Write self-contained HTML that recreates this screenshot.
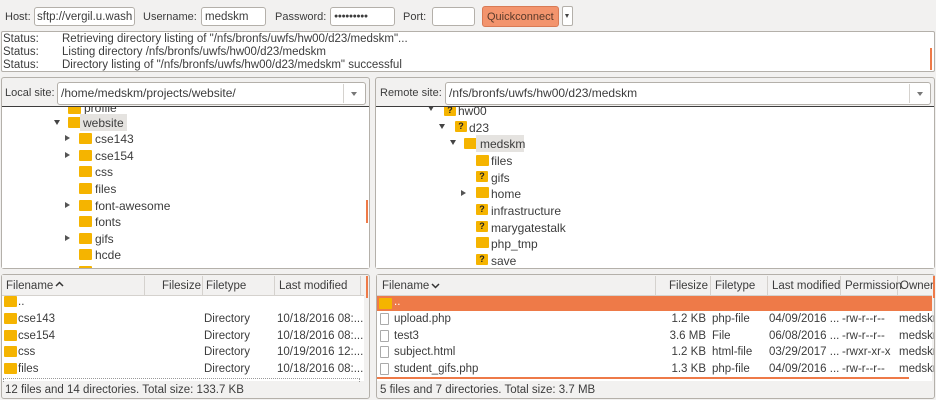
<!DOCTYPE html>
<html><head><meta charset="utf-8"><style>
*{margin:0;padding:0;box-sizing:border-box}
body{width:936px;height:400px;background:#f2f1f0;position:relative;overflow:hidden;font-family:"Liberation Sans",sans-serif;font-size:11.5px;color:#3c3c3c}
.a{position:absolute}
.t{position:absolute;white-space:nowrap;line-height:14px}
.s{font-size:11px}
.in{position:absolute;background:#fff;border:1px solid #b4b0aa;border-radius:3px}
.box{position:absolute;background:#fff;border:1px solid #b4b0aa;border-radius:3px}
.f{position:absolute;width:13px;height:11px;background:#f5b400;border-radius:1px}
.q{position:absolute;width:12px;height:11px;background:#f5b400;border-radius:1px;font-size:9px;font-weight:bold;line-height:11px;text-align:center;color:#222}
.ar{position:absolute;width:0;height:0}
.dn{border-left:3px solid transparent;border-right:3px solid transparent;border-top:5px solid #444}
.rt{border-top:3px solid transparent;border-bottom:3px solid transparent;border-left:5px solid #555}
.doc{position:absolute;width:9px;height:12px;border:1px solid #aaa;background:#fff;border-radius:1px}
.sep{position:absolute;width:1px;background:#d5d2ce}
.or{position:absolute;background:#ee7a48}
</style></head><body>
<!-- toolbar -->
<div class="t s" style="left:5px;top:10px">Host:</div>
<div class="in" style="left:34px;top:7px;width:101px;height:19px"></div>
<div class="t" style="left:37px;top:10px">sftp://vergil.u.wash</div>
<div class="t s" style="left:143px;top:10px">Username:</div>
<div class="in" style="left:201px;top:7px;width:65px;height:19px"></div>
<div class="t" style="left:205px;top:10px">medskm</div>
<div class="t s" style="left:275px;top:10px">Password:</div>
<div class="in" style="left:330px;top:7px;width:65px;height:19px"></div>
<div class="t" style="left:334px;top:10px;font-size:7px;letter-spacing:-0.5px">●●●●●●●●●</div>
<div class="t s" style="left:403px;top:10px">Port:</div>
<div class="in" style="left:432px;top:7px;width:43px;height:19px"></div>
<div class="a" style="left:482px;top:6px;width:77px;height:21px;background:#f3946d;border:1px solid #d87a55;border-radius:3px"></div>
<div class="t s" style="left:487px;top:10px;color:#5a3a2a">Quickconnect</div>
<div class="a" style="left:562px;top:6px;width:11px;height:20px;background:#fff;border:1px solid #b4b0aa;border-radius:2px"></div>
<div class="ar dn" style="left:565px;top:14px;border-width:4px 2.5px 0 2.5px"></div>
<!-- status -->
<div class="box" style="left:1px;top:31px;width:934px;height:41px;border-radius:2px"></div>
<div class="t" style="left:3px;top:32px">Status:</div><div class="t" style="left:62px;top:32px">Retrieving directory listing of "/nfs/bronfs/uwfs/hw00/d23/medskm"...</div>
<div class="t" style="left:3px;top:45px">Status:</div><div class="t" style="left:62px;top:45px">Listing directory /nfs/bronfs/uwfs/hw00/d23/medskm</div>
<div class="t" style="left:3px;top:58px">Status:</div><div class="t" style="left:62px;top:58px">Directory listing of "/nfs/bronfs/uwfs/hw00/d23/medskm" successful</div>
<div class="or" style="left:930px;top:48px;width:2px;height:22px"></div>
<!-- local site panel -->
<div class="box" style="left:1px;top:77px;width:369px;height:192px;background:#f2f1f0"></div>
<div class="t s" style="left:5px;top:86px">Local site:</div>
<div class="in" style="left:57px;top:82px;width:309px;height:23px"></div>
<div class="t" style="left:61px;top:86px;font-size:12px">/home/medskm/projects/website/</div>
<div class="sep" style="left:343px;top:84px;height:19px"></div>
<div class="ar dn" style="left:351px;top:92px;border-width:4px 3px 0 3px;border-top-color:#777"></div>
<div class="a" style="left:2px;top:106px;width:367px;height:162px;background:#fff;border-top:1px solid #3c3c3c"></div>
<div class="a" style="left:2px;top:107px;width:367px;height:161px;overflow:hidden;font-size:12px">
 <div class="f" style="left:66px;top:-4px"></div><div class="t" style="left:82px;top:-6px">profile</div>
 <div class="ar dn" style="left:52px;top:13px"></div><div class="f" style="left:66px;top:10px"></div>
 <div class="a" style="left:78px;top:7px;width:47px;height:17px;background:#e5e3e0"></div><div class="t" style="left:81px;top:9px">website</div>
 <div class="ar rt" style="left:63px;top:28px"></div><div class="f" style="left:77px;top:26px"></div><div class="t" style="left:93px;top:25px">cse143</div>
 <div class="ar rt" style="left:63px;top:45px"></div><div class="f" style="left:77px;top:43px"></div><div class="t" style="left:93px;top:42px">cse154</div>
 <div class="f" style="left:77px;top:59px"></div><div class="t" style="left:93px;top:58px">css</div>
 <div class="f" style="left:77px;top:76px"></div><div class="t" style="left:93px;top:75px">files</div>
 <div class="ar rt" style="left:63px;top:95px"></div><div class="f" style="left:77px;top:93px"></div><div class="t" style="left:93px;top:92px">font-awesome</div>
 <div class="f" style="left:77px;top:109px"></div><div class="t" style="left:93px;top:108px">fonts</div>
 <div class="ar rt" style="left:63px;top:128px"></div><div class="f" style="left:77px;top:126px"></div><div class="t" style="left:93px;top:125px">gifs</div>
 <div class="f" style="left:77px;top:142px"></div><div class="t" style="left:93px;top:141px">hcde</div>
 <div class="f" style="left:77px;top:159px"></div>
</div>
<div class="or" style="left:366px;top:200px;width:2px;height:23px"></div>
<!-- remote site panel -->
<div class="box" style="left:375px;top:77px;width:560px;height:192px;background:#f2f1f0"></div>
<div class="t s" style="left:380px;top:86px">Remote site:</div>
<div class="in" style="left:445px;top:82px;width:486px;height:23px"></div>
<div class="t" style="left:449px;top:86px;font-size:12px">/nfs/bronfs/uwfs/hw00/d23/medskm</div>
<div class="sep" style="left:909px;top:84px;height:19px"></div>
<div class="ar dn" style="left:917px;top:92px;border-width:4px 3px 0 3px;border-top-color:#777"></div>
<div class="a" style="left:376px;top:106px;width:558px;height:162px;background:#fff;border-top:1px solid #3c3c3c"></div>
<div class="a" style="left:376px;top:107px;width:558px;height:161px;overflow:hidden;font-size:12px">
 <div class="ar dn" style="left:52px;top:-1px"></div><div class="q" style="left:68px;top:-2px">?</div><div class="t" style="left:82px;top:-3px">hw00</div>
 <div class="ar dn" style="left:63px;top:17px"></div><div class="q" style="left:79px;top:14px">?</div><div class="t" style="left:93px;top:14px">d23</div>
 <div class="ar dn" style="left:74px;top:33px"></div><div class="f" style="left:88px;top:31px"></div>
 <div class="a" style="left:100px;top:28px;width:48px;height:17px;background:#e5e3e0"></div><div class="t" style="left:104px;top:30px">medskm</div>
 <div class="f" style="left:100px;top:48px"></div><div class="t" style="left:115px;top:47px">files</div>
 <div class="q" style="left:100px;top:64px">?</div><div class="t" style="left:115px;top:64px">gifs</div>
 <div class="ar rt" style="left:85px;top:83px"></div><div class="f" style="left:100px;top:80px"></div><div class="t" style="left:115px;top:80px">home</div>
 <div class="q" style="left:100px;top:97px">?</div><div class="t" style="left:115px;top:97px">infrastructure</div>
 <div class="q" style="left:100px;top:114px">?</div><div class="t" style="left:115px;top:114px">marygatestalk</div>
 <div class="f" style="left:100px;top:130px"></div><div class="t" style="left:115px;top:130px">php_tmp</div>
 <div class="q" style="left:100px;top:147px">?</div><div class="t" style="left:115px;top:147px">save</div>
</div>
<!-- local list -->
<div class="box" style="left:1px;top:274px;width:369px;height:125px;background:#f2f1f0"></div>
<div class="a" style="left:2px;top:275px;width:362px;height:21px;background:#f2f1f0;border-bottom:1px solid #d5d2ce"></div>
<div class="a" style="left:2px;top:296px;width:362px;height:85px;background:#fff"></div>
<div class="sep" style="left:144px;top:276px;height:20px"></div>
<div class="sep" style="left:202px;top:276px;height:20px"></div>
<div class="sep" style="left:274px;top:276px;height:20px"></div>
<div class="sep" style="left:360px;top:276px;height:20px"></div>
<div class="t" style="left:6px;top:279px">Filename</div>
<svg class="a" style="left:55px;top:281px" width="9" height="6"><path d="M1 5 L4.5 1.5 L8 5" fill="none" stroke="#333" stroke-width="1.5"/></svg>
<div class="t" style="left:162px;top:279px">Filesize</div>
<div class="t" style="left:206px;top:279px">Filetype</div>
<div class="t" style="left:279px;top:279px">Last modified</div>
<div class="or" style="left:366px;top:276px;width:2px;height:22px"></div>
<div class="f" style="left:4px;top:296px"></div><div class="t" style="left:18px;top:295px">..</div>
<div class="f" style="left:4px;top:313px"></div><div class="t" style="left:18px;top:312px">cse143</div><div class="t" style="left:204px;top:312px">Directory</div><div class="t" style="left:277px;top:312px">10/18/2016 08:...</div>
<div class="f" style="left:4px;top:330px"></div><div class="t" style="left:18px;top:329px">cse154</div><div class="t" style="left:204px;top:329px">Directory</div><div class="t" style="left:277px;top:329px">10/18/2016 08:...</div>
<div class="f" style="left:4px;top:346px"></div><div class="t" style="left:18px;top:345px">css</div><div class="t" style="left:204px;top:345px">Directory</div><div class="t" style="left:277px;top:345px">10/19/2016 12:...</div>
<div class="f" style="left:4px;top:363px"></div><div class="t" style="left:18px;top:362px">files</div><div class="t" style="left:204px;top:362px">Directory</div><div class="t" style="left:277px;top:362px">10/18/2016 08:...</div>
<div class="a" style="left:3px;top:378px;width:357px;height:4px;border:1px dotted #999;border-bottom:none"></div>
<div class="t" style="left:5px;top:383px">12 files and 14 directories. Total size: 133.7 KB</div>
<!-- remote list -->
<div class="box" style="left:376px;top:274px;width:559px;height:125px;background:#f2f1f0"></div>
<div class="a" style="left:377px;top:275px;width:555px;height:21px;background:#f2f1f0;border-bottom:1px solid #d5d2ce"></div>
<div class="a" style="left:377px;top:296px;width:555px;height:85px;background:#fff"></div>
<div class="sep" style="left:655px;top:276px;height:20px"></div>
<div class="sep" style="left:710px;top:276px;height:20px"></div>
<div class="sep" style="left:767px;top:276px;height:20px"></div>
<div class="sep" style="left:840px;top:276px;height:20px"></div>
<div class="sep" style="left:897px;top:276px;height:20px"></div>
<div class="t" style="left:382px;top:279px">Filename</div>
<svg class="a" style="left:431px;top:283px" width="9" height="6"><path d="M1 1 L4.5 4.5 L8 1" fill="none" stroke="#333" stroke-width="1.5"/></svg>
<div class="t" style="left:669px;top:279px">Filesize</div>
<div class="t" style="left:715px;top:279px">Filetype</div>
<div class="t" style="left:772px;top:279px">Last modified</div>
<div class="t" style="left:845px;top:279px">Permission</div>
<div class="t" style="left:900px;top:279px;width:34px;overflow:hidden">Owner</div>
<div class="or" style="left:933px;top:276px;width:2px;height:22px"></div>
<div class="or" style="left:377px;top:296px;width:555px;height:15px"></div>
<div class="f" style="left:379px;top:298px"></div><div class="t" style="left:394px;top:295px;color:#fff">..</div>
<div class="doc" style="left:380px;top:313px"></div><div class="t" style="left:394px;top:312px">upload.php</div><div class="t" style="left:620px;top:312px;width:86px;text-align:right">1.2 KB</div><div class="t" style="left:712px;top:312px">php-file</div><div class="t" style="left:769px;top:312px">04/09/2016 ...</div><div class="t" style="left:842px;top:312px">-rw-r--r--</div><div class="t" style="left:899px;top:312px;width:35px;overflow:hidden">medskm</div>
<div class="doc" style="left:380px;top:330px"></div><div class="t" style="left:394px;top:329px">test3</div><div class="t" style="left:620px;top:329px;width:86px;text-align:right">3.6 MB</div><div class="t" style="left:712px;top:329px">File</div><div class="t" style="left:769px;top:329px">06/08/2016 ...</div><div class="t" style="left:842px;top:329px">-rw-r--r--</div><div class="t" style="left:899px;top:329px;width:35px;overflow:hidden">medskm</div>
<div class="doc" style="left:380px;top:346px"></div><div class="t" style="left:394px;top:345px">subject.html</div><div class="t" style="left:620px;top:345px;width:86px;text-align:right">1.2 KB</div><div class="t" style="left:712px;top:345px">html-file</div><div class="t" style="left:769px;top:345px">03/29/2017 ...</div><div class="t" style="left:842px;top:345px">-rwxr-xr-x</div><div class="t" style="left:899px;top:345px;width:35px;overflow:hidden">medskm</div>
<div class="doc" style="left:380px;top:363px"></div><div class="t" style="left:394px;top:362px">student_gifs.php</div><div class="t" style="left:620px;top:362px;width:86px;text-align:right">1.3 KB</div><div class="t" style="left:712px;top:362px">php-file</div><div class="t" style="left:769px;top:362px">04/09/2016 ...</div><div class="t" style="left:842px;top:362px">-rw-r--r--</div><div class="t" style="left:899px;top:362px;width:35px;overflow:hidden">medskm</div>
<div class="or" style="left:377px;top:377px;width:532px;height:2px"></div>
<div class="t" style="left:380px;top:383px">5 files and 7 directories. Total size: 3.7 MB</div>
</body></html>
